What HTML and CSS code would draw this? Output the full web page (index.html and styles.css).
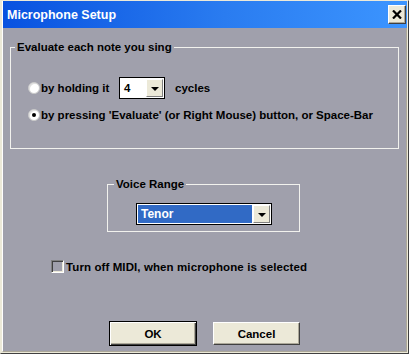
FILE: index.html
```html
<!DOCTYPE html>
<html>
<head>
<meta charset="utf-8">
<link rel="stylesheet" href="styles.css">
</head>
<body>
<div class="window">
  <div class="titlebar">
    <span class="title">Microphone Setup</span>
    <div class="close">
      <svg width="10" height="9" viewBox="0 0 10 9"><path d="M1 0.5 L9 8.5 M9 0.5 L1 8.5" stroke="#000" stroke-width="2.2" fill="none"/></svg>
    </div>
  </div>
  <div class="client">
    <div class="group eval">
      <div class="legend">Evaluate each note you sing</div>
      <div class="row row1">
        <span class="radio"></span>
        <span class="lbl hold">by holding it</span>
        <div class="combo">
          <span class="combo-text">4</span>
          <span class="drop"><span class="tri"></span></span>
        </div>
        <span class="lbl cycles">cycles</span>
      </div>
      <div class="row row2">
        <span class="radio checked"></span>
        <span class="lbl">by pressing 'Evaluate' (or Right Mouse) button, or Space-Bar</span>
      </div>
    </div>
    <div class="group voice">
      <div class="legend">Voice Range</div>
      <div class="select">
        <span class="sel-text">Tenor</span>
        <span class="drop"><span class="tri"></span></span>
      </div>
    </div>
    <div class="check-row">
      <span class="checkbox"></span>
      <span class="lbl">Turn off MIDI, when microphone is selected</span>
    </div>
    <div class="buttons">
      <div class="btn default">OK</div>
      <div class="btn">Cancel</div>
    </div>
  </div>
</div>
</body>
</html>
```
FILE: styles.css
```css
html, body {
  margin: 0;
  padding: 0;
  background: #ece9d8;
}
.window {
  width: 409px;
  height: 354px;
  box-sizing: border-box;
  background: #ece9d8;
  border-top: 1px solid #ece9d8;
  border-left: 1px solid #ece9d8;
  border-right: 1px solid #404040;
  border-bottom: 1px solid #404040;
  display: flex;
  flex-direction: column;
  font-family: "Liberation Sans", Arial, sans-serif;
  font-weight: bold;
  font-size: 11.5px;
  color: #000;
}
.titlebar {
  height: 27px;
  margin: 0 1px 0 1px;
  border-left: 1px solid #fff;
  background: linear-gradient(to right, #0852e0 0%, #2a7cf0 55%, #3c95ff 100%);
  display: flex;
  align-items: center;
  justify-content: space-between;
  padding-left: 4px;
  padding-right: 1px;
}
.title {
  color: #fff;
  font-size: 12.5px;
  font-weight: bold;
  margin-top: 1px;
}
.close {
  width: 16px;
  height: 17px;
  background: #ece9d8;
  border-top: 1px solid #fff;
  border-left: 1px solid #fff;
  border-right: 1px solid #404040;
  border-bottom: 1px solid #404040;
  box-shadow: inset -1px -1px 0 #aca899;
  display: flex;
  align-items: center;
  justify-content: center;
}
.client {
  flex: 1;
  margin: 0 1px 1px 1px;
  border-left: 1px solid #fff;
  border-bottom: 1px solid #aca899;
  border-right: 1px solid #aca899;
  background: #a0a0ac;
  display: flex;
  flex-direction: column;
}
.group {
  border: 1px solid #f2f2ee;
  box-sizing: border-box;
  display: flex;
  flex-direction: column;
}
.legend {
  margin-top: -7px;
  height: 13px;
  line-height: 13px;
  background: #a0a0ac;
  padding: 0 2px;
  align-self: flex-start;
}
.eval {
  margin-top: 19px;
  margin-left: 7px;
  width: 389px;
  height: 102px;
}
.eval .legend {
  margin-left: 4px;
}
.row {
  display: flex;
  align-items: center;
  padding-left: 17px;
}
.row1 {
  margin-top: 23px;
  height: 22px;
}
.row2 {
  margin-top: 8px;
  height: 16px;
}
.radio {
  width: 12px;
  height: 12px;
  box-sizing: border-box;
  border-radius: 50%;
  background: #fff;
  border: 1px solid #c8c8c8;
  box-shadow: inset 1px 1px 0 #e0e0e0;
  margin-right: 1px;
  position: relative;
  flex: none;
}
.radio.checked::after {
  content: "";
  position: absolute;
  left: 3px;
  top: 3px;
  width: 4px;
  height: 4px;
  border-radius: 50%;
  background: #000;
}
.lbl {
  white-space: nowrap;
}
.hold {
  width: 78px;
}
.combo {
  width: 46px;
  height: 22px;
  box-sizing: border-box;
  border: 1px solid #000;
  box-shadow: inset 1px 1px 0 #fff;
  background: #fff;
  display: flex;
  align-items: center;
  justify-content: space-between;
  padding: 1px;
}
.combo-text {
  padding-left: 3px;
}
.drop {
  width: 17px;
  height: 18px;
  box-sizing: border-box;
  background: #ece9d8;
  border-top: 1px solid #fff;
  border-left: 1px solid #fff;
  border-right: 1px solid #808080;
  border-bottom: 1px solid #808080;
  display: flex;
  align-items: center;
  justify-content: center;
}
.tri {
  width: 0;
  height: 0;
  border-left: 4px solid transparent;
  border-right: 4px solid transparent;
  border-top: 4px solid #000;
  margin-top: 1px;
}
.cycles {
  margin-left: 10px;
}
.voice {
  margin-top: 35px;
  margin-left: 104px;
  width: 193px;
  height: 48px;
}
.voice .legend {
  margin-left: 6px;
}
.select {
  margin-top: 12px;
  margin-left: 28px;
  width: 136px;
  height: 22px;
  box-sizing: border-box;
  border: 1px solid #000;
  background: #fff;
  padding: 1px;
  display: flex;
  align-items: center;
}
.sel-text {
  flex: 1;
  height: 18px;
  line-height: 18px;
  background: #316ac5;
  color: #fff;
  padding-left: 3px;
  font-size: 12px;
  margin-right: 1px;
}
.check-row {
  margin-top: 28px;
  margin-left: 48px;
  display: flex;
  align-items: center;
  height: 13px;
}
.checkbox {
  width: 13px;
  height: 13px;
  box-sizing: border-box;
  border-top: 1px solid #808080;
  border-left: 1px solid #808080;
  border-right: 1px solid #fff;
  border-bottom: 1px solid #fff;
  box-shadow: inset 1px 1px 0 #404040, inset -1px -1px 0 #ece9d8;
  background: #a0a0ac;
  margin-right: 2px;
}
.check-row .lbl {
  letter-spacing: 0.1px;
}
.buttons {
  margin-top: 48px;
  margin-left: 106px;
  display: flex;
  align-items: center;
  gap: 16px;
}
.btn {
  width: 87px;
  height: 23px;
  box-sizing: border-box;
  background: #ece9d8;
  border-top: 1px solid #fff;
  border-left: 1px solid #fff;
  border-right: 1px solid #404040;
  border-bottom: 1px solid #404040;
  box-shadow: inset -1px -1px 0 #aca899;
  display: flex;
  align-items: center;
  justify-content: center;
  font-size: 11.5px;
}
.btn.default {
  width: 88px;
  height: 25px;
  border: 1px solid #000;
  box-shadow: inset 1px 1px 0 #fff, inset -1px -1px 0 #404040, inset -2px -2px 0 #aca899;
}
```
